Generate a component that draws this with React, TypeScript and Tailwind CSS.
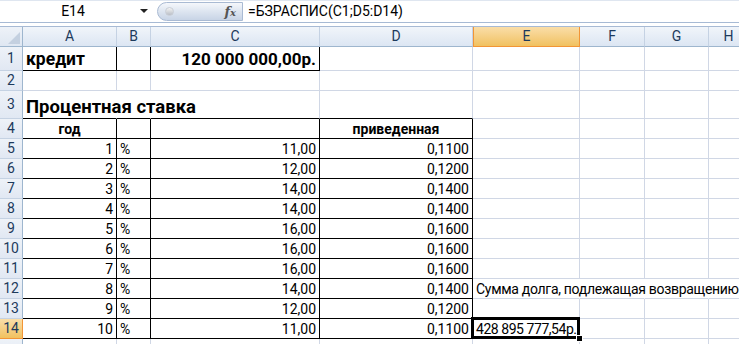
import React from "react";

const COLS = ["A", "B", "C", "D", "E", "F", "G", "H"];
const COLW = [94, 34, 169, 153, 107, 65, 64, 40];

type Cell = { t?: string; cls?: string; align?: "l" | "r" | "c" };

const pct = ["11,00", "12,00", "14,00", "14,00", "16,00", "16,00", "16,00", "14,00", "12,00", "11,00"];
const red = ["0,1100", "0,1200", "0,1400", "0,1400", "0,1600", "0,1600", "0,1600", "0,1400", "0,1200", "0,1100"];

type Row = { n: number; h: number; cells: Record<string, Cell> };

const rows: Row[] = [
  {
    n: 1,
    h: 24,
    cells: {
      A: { t: "кредит", cls: "font-bold text-[17.5px]", align: "l" },
      C: { t: "120 000 000,00р.", cls: "font-bold text-[17px]", align: "r" },
    },
  },
  { n: 2, h: 20, cells: {} },
  { n: 3, h: 28, cells: { A: { t: "Процентная ставка", cls: "font-bold text-[18.5px]", align: "l" } } },
  {
    n: 4,
    h: 20,
    cells: {
      A: { t: "год", cls: "font-bold", align: "c" },
      D: { t: "приведенная", cls: "font-bold", align: "c" },
    },
  },
  ...pct.map((p, i) => {
    const cells: Record<string, Cell> = {
      A: { t: String(i + 1), align: "r" },
      B: { t: "%", align: "l" },
      C: { t: p, align: "r" },
      D: { t: red[i], align: "r" },
    };
    if (i === 7) cells.E = { t: "Сумма долга, подлежащая возвращению", cls: "tracking-[-0.3px]", align: "l" };
    if (i === 9) cells.E = { t: "428 895 777,54р.", cls: "tracking-[-0.45px]", align: "l" };
    return { n: i + 5, h: 20, cells };
  }),
  { n: 15, h: 20, cells: {} },
];

function rightBlack(r: number, c: string) {
  if (r === 1) return ["A", "B", "C"].includes(c);
  if (r >= 4 && r <= 14) return ["A", "B", "C", "D"].includes(c);
  return false;
}
function bottomBlack(r: number, c: string) {
  if (r === 1) return ["A", "B", "C"].includes(c);
  if (r >= 3 && r <= 14) return ["A", "B", "C", "D"].includes(c);
  return false;
}
function hideRight(r: number, c: string) {
  if (r === 3) return ["A", "B"].includes(c);
  if (r === 12) return ["E", "F", "G"].includes(c);
  return false;
}

export default function App() {
  const font = "font-['Roboto','Noto_Sans',sans-serif]";
  return (
    <div className={`w-[739px] h-[344px] overflow-hidden bg-white text-black ${font}`}>
      {/* formula bar */}
      <div className="flex h-[23px] border-b border-[#a7bad4] border-t border-t-[#dfe6f0] bg-white">
        <div className="w-[157px] flex items-center">
          <div className="flex-1 text-center text-[14px] pl-[6px] text-black">E14</div>
          <svg width="9" height="5" viewBox="0 0 9 5" className="mr-[8px]">
            <path d="M0 0 H8 L4 4 Z" fill="#222" />
          </svg>
        </div>
        <div className="w-[86px] my-[1px] rounded-l-[11px] border border-[#a9bad3] bg-gradient-to-b from-[#f5f7fb] via-[#dde5f0] to-[#c8d4e6] flex items-center">
          <div className="ml-[7px] w-[9px] h-[9px] rounded-full bg-gradient-to-b from-[#f4f4f4] to-[#b9bec6] border border-[#c9ced6]" />
          <div className="flex-1" />
          <span className="mr-[6px] font-['DejaVu_Serif',serif] italic font-bold text-[13px] text-[#555]">
            f<span className="text-[10px]">x</span>
          </span>
        </div>
        <div className="flex-1 flex items-center pl-[5px] text-[14px] text-black">=БЗРАСПИС(C1;D5:D14)</div>
      </div>
      <div className="h-[4px] bg-white border-b border-[#a7bad4]" />
      {/* sheet */}
      <div
        className="grid"
        style={{ gridTemplateColumns: `23px ${COLW.map((w) => w + "px").join(" ")}` }}
      >
        {/* header row */}
        <div className="h-[20px] bg-gradient-to-b from-[#eef2f8] to-[#dfe7f2] border-r border-b border-[#9eb6ce] relative">
          <svg width="12" height="12" viewBox="0 0 12 12" className="absolute right-[2px] bottom-[2px]">
            <path d="M12 0 V12 H0 Z" fill="#c4d0e0" />
          </svg>
        </div>
        {COLS.map((c) => {
          const sel = c === "E";
          return (
            <div
              key={c}
              className={`h-[20px] flex items-center justify-center text-[14px] border-b ${
                sel
                  ? "bg-gradient-to-b from-[#fadea8] to-[#f1c15f] border-[#f29536] border-r border-l border-l-[#f29536] text-[#1d3a5c]"
                  : "bg-gradient-to-b from-[#f1f5fa] to-[#dce6f3] border-r border-r-[#c5d2e3] border-b-[#9eb6ce] text-[#1d3a5c]"
              }`}
            >
              {c}
            </div>
          );
        })}
        {rows.map((row) => (
          <React.Fragment key={row.n}>
            <div
              className={`flex items-center justify-center text-[14px] text-[#1d3a5c] border-b ${
                row.n === 14
                  ? "bg-gradient-to-b from-[#fadea8] to-[#f1c15f] border-r border-[#f29536]"
                  : "bg-gradient-to-b from-[#eef2f8] to-[#e1e8f3] border-r border-r-[#9eb6ce] border-b-[#c5d2e3]"
              }`}
              style={{ height: row.h }}
            >
              {row.n <= 14 ? row.n : ""}
            </div>
            {COLS.map((c) => {
              const cell = row.cells[c];
              const rb = rightBlack(row.n, c);
              const bb = bottomBlack(row.n, c);
              const hr = hideRight(row.n, c);
              const rCls = rb ? "border-r-black" : hr ? "border-r-transparent" : "border-r-[#d0d7e5]";
              const bCls = bb ? "border-b-black" : "border-b-[#d0d7e5]";
              const justify =
                cell?.align === "r" ? "justify-end pr-[3px]" : cell?.align === "c" ? "justify-center" : "justify-start pl-[3px]";
              const selected = row.n === 14 && c === "E";
              return (
                <div
                  key={c}
                  className={`relative flex items-end border-r border-b ${rCls} ${bCls} ${justify} text-[14px] leading-none pb-[2px] whitespace-nowrap overflow-visible ${
                    cell?.t ? "z-10" : ""
                  }`}
                  style={{ height: row.h }}
                >
                  {cell?.t && <span className={cell.cls ?? ""}>{cell.t}</span>}
                  {selected && (
                    <>
                      <div className="absolute -left-[2px] -top-[2px] -right-[1px] -bottom-[1px] border-[3px] border-black pointer-events-none" />
                      <div className="absolute -right-[4px] -bottom-[4px] w-[7px] h-[7px] bg-black border border-white" />
                    </>
                  )}
                </div>
              );
            })}
          </React.Fragment>
        ))}
      </div>
    </div>
  );
}
